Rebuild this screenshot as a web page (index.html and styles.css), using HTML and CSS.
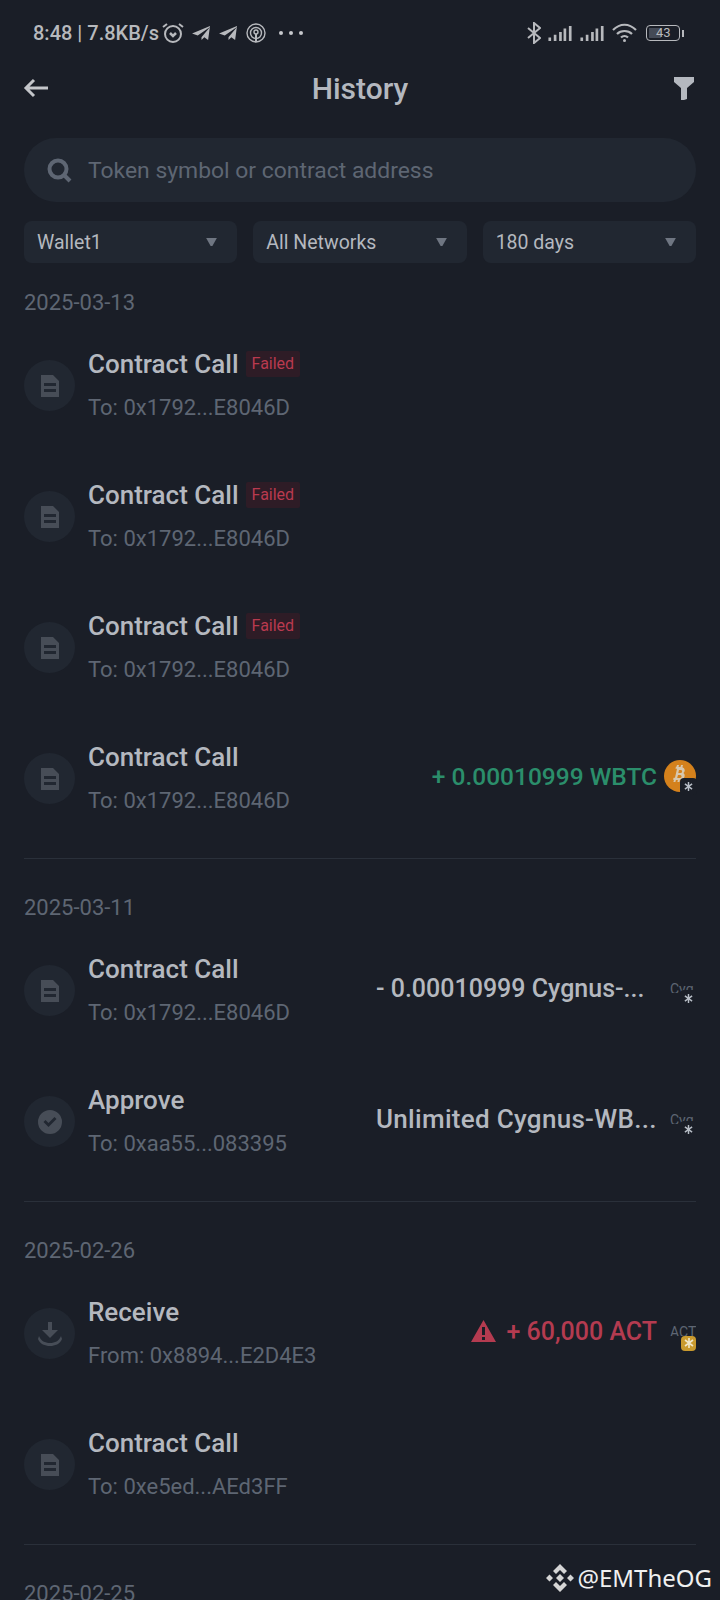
FILE: index.html
```html
<!DOCTYPE html>
<html lang="en">
<head>
    <meta charset="UTF-8">
    <meta name="viewport" content="width=device-width, initial-scale=1.0">
    <title>History</title>
    <link rel="stylesheet" href="styles.css">
</head>
<body>
    <svg class="defs" width="0" height="0">
        <symbol id="doc" viewBox="0 0 20 24">
            <path d="M1 1h12l6 6v16H1z M4 9v3h12V9z M4 15v3h12v-3z" fill="currentColor" fill-rule="evenodd"/>
        </symbol>
        <symbol id="check" viewBox="0 0 24 24">
            <path d="M12 0a12 12 0 1 0 0 24a12 12 0 0 0 0-24z M5.500 12l2-2 3 3 6-6 2 2-8 8z" fill="currentColor" fill-rule="evenodd"/>
        </symbol>
        <symbol id="download" viewBox="0 0 24 24">
            <path d="M10 0h4v8h6l-8 8-8-8h6z M1 14c2 5 6 7 11 7s9-2 11-7l1 3c-2 5-7 7-12 7S2 22 0 17z" fill="currentColor"/>
        </symbol>
        <symbol id="caret" viewBox="0 0 12 10">
            <path d="M0 0h12L7 9H5z" fill="currentColor"/>
        </symbol>
        <symbol id="plane" viewBox="0 0 20 18">
            <path d="M19 1L0 9l6 2 13-9-9 11 0 3 3-3 4 3z" fill="currentColor"/>
        </symbol>
        <symbol id="bars" viewBox="0 0 26 18">
            <path d="M0 14h3v4H0z M6 11h3v7H6z M12 8h3v10h-3z M17 4h3v14h-3z M23 1h3v17h-3z" fill="currentColor"/>
        </symbol>
        <symbol id="snow" viewBox="0 0 10 10">
            <path d="M5 0v10 M1 2l8 6 M9 2l-8 6" stroke="currentColor" stroke-width="1.600" fill="none"/>
        </symbol>
    </svg>

    <div class="status">
        <div class="status-left">
            <span class="status-text">8:48 | 7.8KB/s</span>
            <svg class="alarm" width="22" height="22" viewBox="0 0 22 22" fill="none" stroke="currentColor" stroke-width="2">
                <circle cx="11" cy="12" r="8"/>
                <path d="M1 5l4-3 M21 5l-4-3"/>
                <path d="M8 11l3 3 3-3" stroke-width="2.500"/>
            </svg>
            <svg class="plane" width="19" height="17"><use href="#plane"/></svg>
            <svg class="plane" width="19" height="17"><use href="#plane"/></svg>
            <svg class="hotspot" width="20" height="20" viewBox="0 0 20 20" fill="none" stroke="currentColor" stroke-width="1.400">
                <circle cx="10" cy="10" r="9"/>
                <circle cx="10" cy="10" r="5.500"/>
                <circle cx="10" cy="9" r="2"/>
                <path d="M10 11v8" stroke-width="2"/>
            </svg>
            <div class="dots"><i></i><i></i><i></i></div>
        </div>
        <div class="status-right">
            <svg class="bt" width="14" height="22" viewBox="0 0 14 22" fill="none" stroke="currentColor" stroke-width="2">
                <path d="M1 6l12 10-6 5V1l6 5L1 16"/>
            </svg>
            <svg width="26" height="16"><use href="#bars"/></svg>
            <svg width="26" height="16"><use href="#bars"/></svg>
            <svg class="wifi" width="25" height="20" viewBox="0 0 25 20" fill="none" stroke="currentColor" stroke-width="2.200">
                <path d="M1 7c7-7 16-7 23 0 M5 11c4-4 11-4 15 0 M9 14.500c2-2 5-2 7 0"/>
                <circle cx="12.500" cy="17.500" r="1.500" fill="currentColor" stroke="none"/>
            </svg>
            <div class="battery"><span class="battery-level"></span><span class="battery-num">43</span></div>
            <span class="battery-tip"></span>
        </div>
    </div>

    <header class="topbar">
        <div class="topbar-side">
            <svg class="back" width="26" height="20" viewBox="0 0 26 20" fill="none" stroke="currentColor" stroke-width="3">
                <path d="M25 10H3 M11 2l-8 8 8 8"/>
            </svg>
        </div>
        <h1>History</h1>
        <div class="topbar-side end">
            <svg class="funnel" width="20" height="24" viewBox="0 0 20 24">
                <path d="M0 1h20v5l-7 6v11l-6 2V12L0 6z" fill="currentColor"/>
            </svg>
        </div>
    </header>

    <div class="search">
        <svg width="25" height="25" viewBox="0 0 25 25" fill="none" stroke="currentColor" stroke-width="4">
            <circle cx="11" cy="11" r="8.500"/>
            <path d="M17 17l6 6"/>
        </svg>
        <span>Token symbol or contract address</span>
    </div>

    <div class="filters">
        <div class="filter"><span>Wallet1</span><svg width="11" height="9"><use href="#caret"/></svg></div>
        <div class="filter"><span>All Networks</span><svg width="11" height="9"><use href="#caret"/></svg></div>
        <div class="filter"><span>180 days</span><svg width="11" height="9"><use href="#caret"/></svg></div>
    </div>

    <section class="group">
        <div class="date">2025-03-13</div>
        <div class="row">
            <div class="tx-icon"><svg width="20" height="24"><use href="#doc"/></svg></div>
            <div class="tx-info">
                <div class="tx-title">Contract Call <span class="failed">Failed</span></div>
                <div class="tx-to">To: 0x1792...E8046D</div>
            </div>
        </div>
        <div class="row">
            <div class="tx-icon"><svg width="20" height="24"><use href="#doc"/></svg></div>
            <div class="tx-info">
                <div class="tx-title">Contract Call <span class="failed">Failed</span></div>
                <div class="tx-to">To: 0x1792...E8046D</div>
            </div>
        </div>
        <div class="row">
            <div class="tx-icon"><svg width="20" height="24"><use href="#doc"/></svg></div>
            <div class="tx-info">
                <div class="tx-title">Contract Call <span class="failed">Failed</span></div>
                <div class="tx-to">To: 0x1792...E8046D</div>
            </div>
        </div>
        <div class="row">
            <div class="tx-icon"><svg width="20" height="24"><use href="#doc"/></svg></div>
            <div class="tx-info">
                <div class="tx-title">Contract Call</div>
                <div class="tx-to">To: 0x1792...E8046D</div>
            </div>
            <div class="amount green">+ 0.00010999 WBTC</div>
            <div class="token">
                <svg class="btc" width="32" height="32" viewBox="0 0 32 32">
                    <circle cx="16" cy="16" r="16" fill="#d4811c"/>
                    <path d="M13 5h2l-.5 2h2l.5-2h2l-.6 2.300c2.600 1 3.200 4.200 1 5.700 2.300 1.500 1.400 6-2 6.500l-1.400.2-.6 2.300h-2l.5-2h-2l-.5 2h-2l.6-2.300H9l.6-2h1.400l2-9H11.500l.4-2h.6z M15 10l-.7 3h2.700c1.500 0 1.500-3 0-3z M14 15l-.8 3h3c1.800 0 1.800-3 0-3z" fill="#d8c8ae" fill-rule="evenodd"/>
                </svg>
                <div class="chain"><svg width="9" height="9"><use href="#snow"/></svg></div>
            </div>
        </div>
    </section>

    <section class="group">
        <div class="date">2025-03-11</div>
        <div class="row">
            <div class="tx-icon"><svg width="20" height="24"><use href="#doc"/></svg></div>
            <div class="tx-info">
                <div class="tx-title">Contract Call</div>
                <div class="tx-to">To: 0x1792...E8046D</div>
            </div>
            <div class="amount wide">- 0.00010999 Cygnus-...</div>
            <div class="token">
                <span class="token-name">Cyg</span>
                <div class="chain"><svg width="9" height="9"><use href="#snow"/></svg></div>
            </div>
        </div>
        <div class="row">
            <div class="tx-icon"><svg width="24" height="24"><use href="#check"/></svg></div>
            <div class="tx-info">
                <div class="tx-title">Approve</div>
                <div class="tx-to">To: 0xaa55...083395</div>
            </div>
            <div class="amount wide unlimited">Unlimited Cygnus-WB...</div>
            <div class="token">
                <span class="token-name">Cyg</span>
                <div class="chain"><svg width="9" height="9"><use href="#snow"/></svg></div>
            </div>
        </div>
    </section>

    <section class="group">
        <div class="date">2025-02-26</div>
        <div class="row">
            <div class="tx-icon"><svg width="24" height="24"><use href="#download"/></svg></div>
            <div class="tx-info">
                <div class="tx-title">Receive</div>
                <div class="tx-to">From: 0x8894...E2D4E3</div>
            </div>
            <svg class="warn" width="25" height="22" viewBox="0 0 25 22">
                <path d="M12.500 0L25 22H0z M11 7v8h3V7z M11 17v3h3v-3z" fill="currentColor" fill-rule="evenodd"/>
            </svg>
            <div class="amount red">+ 60,000 ACT</div>
            <div class="token">
                <span class="token-name">ACT</span>
                <div class="chain bsc"><svg width="10" height="10"><use href="#snow"/></svg></div>
            </div>
        </div>
        <div class="row">
            <div class="tx-icon"><svg width="20" height="24"><use href="#doc"/></svg></div>
            <div class="tx-info">
                <div class="tx-title">Contract Call</div>
                <div class="tx-to">To: 0xe5ed...AEd3FF</div>
            </div>
        </div>
    </section>

    <section class="group">
        <div class="date">2025-02-25</div>
    </section>

    <div class="watermark">
        <svg width="28" height="28" viewBox="0 0 28 28" fill="#d5d5d5">
            <path d="M14 0l7 7-3 3-4-4-4 4-3-3z M14 28l7-7-3-3-4 4-4-4-3 3z M3.500 10.500L7 14l-3.500 3.500L0 14z M24.500 10.500L28 14l-3.500 3.500L21 14z M14 10l4 4-4 4-4-4z"/>
        </svg>
        <span>@EMTheOG</span>
    </div>
</body>
</html>
```

FILE: styles.css
```css
* {
    margin: 0;
    padding: 0;
    box-sizing: border-box;
}

html, body {
    height: 1600px;
    overflow: hidden;
}

body {
    position: relative;
    font-family: "Roboto", "Noto Sans", sans-serif;
    background-color: #1a1e27;
    color: #b4b8bf;
}

.defs {
    position: absolute;
}

/* status bar */
.status {
    display: flex;
    justify-content: space-between;
    align-items: center;
    height: 66px;
    padding: 0 36px 0 33px;
    color: #b7b9bd;
}

.status-left, .status-right {
    display: flex;
    align-items: center;
}

.status-text {
    font-size: 20px;
    font-weight: 500;
    margin-right: 3px;
}

.status-left .plane {
    margin-left: 8px;
}

.hotspot {
    margin-left: 8px;
}

.dots {
    display: flex;
    gap: 6px;
    margin-left: 13px;
}

.dots i {
    width: 4px;
    height: 4px;
    border-radius: 50%;
    background-color: #c6c8cc;
}

.status-right {
    gap: 6px;
}

.wifi {
    margin-left: 1px;
}

.battery {
    position: relative;
    width: 34px;
    height: 16px;
    border: 1.500px solid #b7b9bd;
    border-radius: 4px;
    margin-left: 3px;
}

.battery-level {
    position: absolute;
    left: 2px;
    top: 2px;
    bottom: 2px;
    width: 12px;
    background-color: #444a56;
}

.battery-num {
    position: absolute;
    left: 9px;
    top: -1px;
    font-size: 13px;
    line-height: 16px;
}

.battery-tip {
    width: 2px;
    height: 7px;
    margin-left: -4px;
    background-color: #b7b9bd;
}

/* title row */
.topbar {
    display: flex;
    justify-content: space-between;
    align-items: center;
    height: 44px;
    padding: 0 26px;
}

.topbar-side {
    display: flex;
    width: 40px;
}

.topbar-side.end {
    justify-content: flex-end;
}

.topbar h1 {
    font-size: 30px;
    font-weight: 500;
}

.back {
    margin-left: -3px;
    color: #c4c6ca;
}

/* search */
.search {
    display: flex;
    align-items: center;
    gap: 16px;
    height: 64px;
    margin: 28px 24px 0;
    padding: 0 23px;
    border-radius: 32px;
    background-color: #212731;
    color: #5e6673;
    font-size: 22.900px;
}

/* dropdowns */
.filters {
    display: flex;
    gap: 16px;
    margin: 19px 24px 0;
}

.filter {
    flex: 1;
    display: flex;
    justify-content: space-between;
    align-items: center;
    height: 42px;
    padding: 0 20px 0 13px;
    border-radius: 8px;
    background-color: #212731;
    font-size: 19.500px;
}

.filter svg {
    color: #6f7682;
}

/* transaction list */
.group {
    margin: 0 24px;
    padding-bottom: 14px;
    border-bottom: 1px solid #2a303a;
}

.group:last-of-type {
    border-bottom: none;
}

.date {
    padding-top: 26px;
    margin-bottom: 3px;
    font-size: 22px;
    line-height: 28px;
    color: #5e6673;
}

.group + .group .date {
    padding-top: 35px;
}

.row {
    display: flex;
    align-items: center;
    height: 131px;
}

.tx-icon {
    flex: none;
    display: flex;
    justify-content: center;
    align-items: center;
    width: 51px;
    height: 51px;
    margin-right: 13px;
    border-radius: 50%;
    background-color: #212731;
    color: #474d57;
}

.tx-info {
    flex: 1;
    min-width: 0;
}

.tx-title {
    display: flex;
    align-items: center;
    gap: 7px;
    font-size: 26px;
    font-weight: 500;
    line-height: 32px;
    margin-bottom: 12px;
}

.tx-to {
    font-size: 22px;
    line-height: 32px;
    color: #5e6673;
}

.failed {
    padding: 0 6px;
    border-radius: 2px;
    background-color: #2e1c26;
    color: #b93a4f;
    font-size: 16px;
    font-weight: 400;
    line-height: 26px;
}

.amount {
    flex: none;
    margin-bottom: 5px;
    font-size: 25px;
    font-weight: 500;
    white-space: nowrap;
}

.amount.wide {
    width: 281px;
}

.amount.unlimited {
    font-size: 26px;
    letter-spacing: 0.300px;
}

.green {
    color: #2b8e6b;
    font-size: 24.500px;
}

.red, .warn {
    color: #b43b50;
}

.warn {
    flex: none;
    margin: 0 10px 5px 0;
}

.token {
    position: relative;
    flex: none;
    width: 32px;
    height: 32px;
    margin: 0 0 6px 7px;
}

.token-name {
    position: absolute;
    left: 6px;
    top: 10px;
    height: 11px;
    overflow: hidden;
    font-size: 14px;
    line-height: 14px;
    color: #5e6673;
}

.chain {
    position: absolute;
    right: -1px;
    bottom: -3px;
    display: flex;
    justify-content: center;
    align-items: center;
    width: 17px;
    height: 17px;
    border-radius: 4px;
    background-color: #1a1e27;
    color: #b7bdc6;
}

.chain.bsc {
    right: 0;
    bottom: -4px;
    width: 15px;
    height: 15px;
    background-color: #c99a2e;
    color: #f0e6c8;
}

.watermark {
    position: absolute;
    right: 8px;
    bottom: 6px;
    display: flex;
    align-items: center;
    gap: 3px;
    font-family: "Noto Sans", sans-serif;
    font-size: 24px;
    color: #f0f0f0;
}
```
